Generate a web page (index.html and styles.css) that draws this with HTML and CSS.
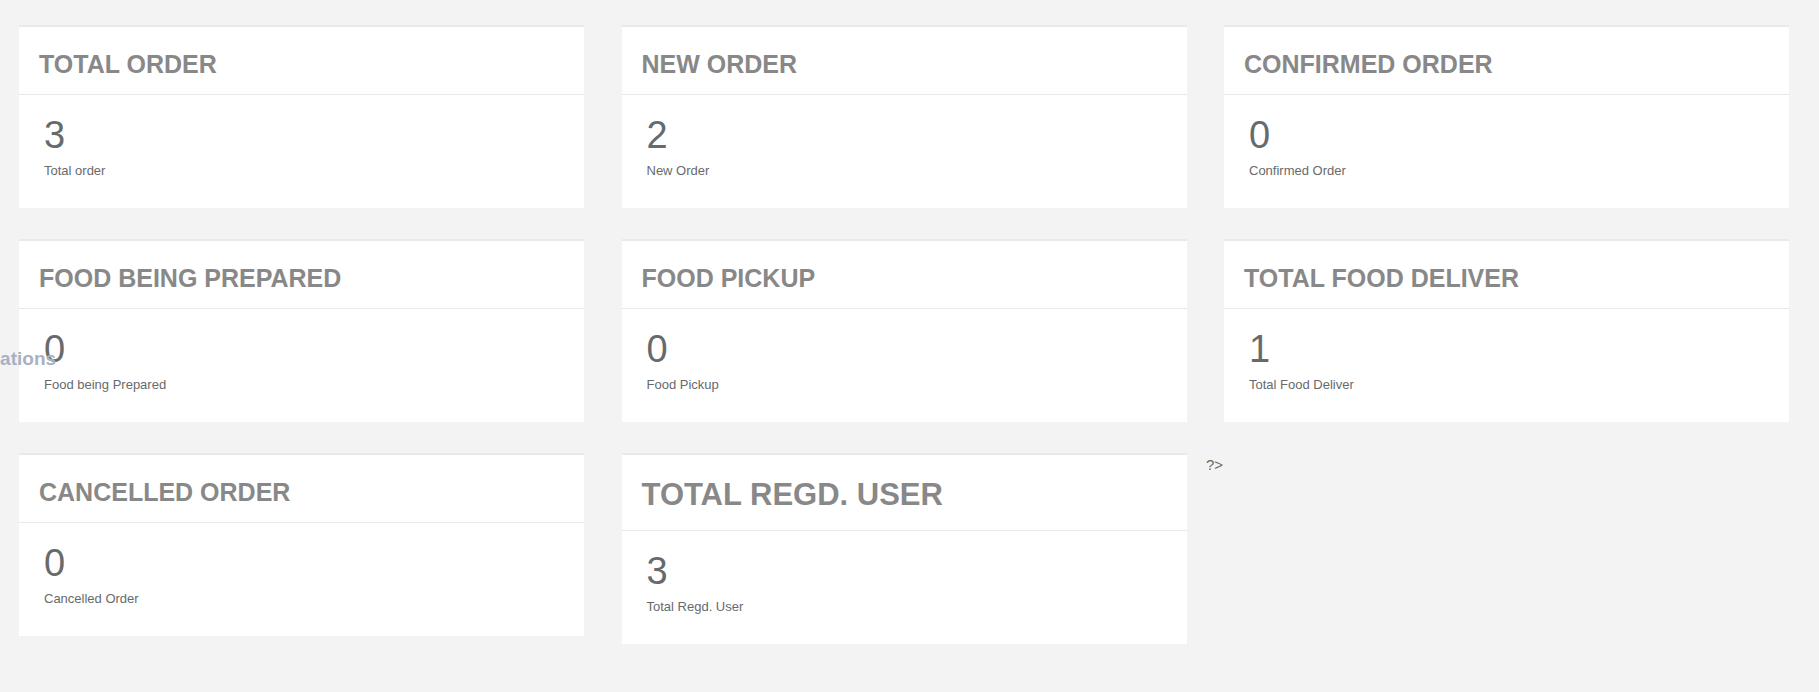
FILE: index.html
```html
<!DOCTYPE html>
<html>
<head>
<meta charset="utf-8">
<title>Dashboard</title>
<link rel="stylesheet" href="styles.css">
</head>
<body>
<span class="nav-label">Notifications</span>
<div class="dashboard">
  <div class="ibox">
    <div class="ibox-title"><h3>TOTAL ORDER</h3></div>
    <div class="ibox-content"><h1 class="count">3</h1><small class="caption">Total order</small></div>
  </div>
  <div class="ibox">
    <div class="ibox-title"><h3>NEW ORDER</h3></div>
    <div class="ibox-content"><h1 class="count">2</h1><small class="caption">New Order</small></div>
  </div>
  <div class="ibox">
    <div class="ibox-title"><h3>CONFIRMED ORDER</h3></div>
    <div class="ibox-content"><h1 class="count">0</h1><small class="caption">Confirmed Order</small></div>
  </div>
  <div class="ibox">
    <div class="ibox-title"><h3>FOOD BEING PREPARED</h3></div>
    <div class="ibox-content"><h1 class="count">0</h1><small class="caption">Food being Prepared</small></div>
  </div>
  <div class="ibox">
    <div class="ibox-title"><h3>FOOD PICKUP</h3></div>
    <div class="ibox-content"><h1 class="count">0</h1><small class="caption">Food Pickup</small></div>
  </div>
  <div class="ibox">
    <div class="ibox-title"><h3>TOTAL FOOD DELIVER</h3></div>
    <div class="ibox-content"><h1 class="count">1</h1><small class="caption">Total Food Deliver</small></div>
  </div>
  <div class="ibox">
    <div class="ibox-title"><h3>CANCELLED ORDER</h3></div>
    <div class="ibox-content"><h1 class="count">0</h1><small class="caption">Cancelled Order</small></div>
  </div>
  <div class="ibox">
    <div class="ibox-title ibox-title-lg"><h2>TOTAL REGD. USER</h2></div>
    <div class="ibox-content"><h1 class="count">3</h1><small class="caption">Total Regd. User</small></div>
  </div>
  <div class="stray">?&gt;</div>
</div>
</body>
</html>
```
FILE: styles.css
```css
html, body {
  margin: 0;
  padding: 0;
}
body {
  background: #f3f3f4;
  font-family: "Liberation Sans", Arial, sans-serif;
  color: #676a6c;
  position: relative;
  min-height: 692px;
  overflow: hidden;
}
.nav-label {
  position: absolute;
  left: -59px;
  top: 349px;
  font-weight: 700;
  font-size: 19px;
  line-height: 20px;
  color: #a7b1c2;
  white-space: nowrap;
  z-index: 1;
}
.dashboard {
  display: grid;
  grid-template-columns: repeat(3, 565px);
  column-gap: 37.5px;
  row-gap: 31px;
  align-items: start;
  padding: 25px 0 0 19px;
}
.ibox {
  background: #fff;
  border-top: 2px solid #e7eaec;
}
.ibox-title {
  padding: 24px 20px 16px 20px;
  border-bottom: 1px solid #e7eaec;
}
.ibox-title h3 {
  margin: 0;
  font-size: 25px;
  line-height: 27px;
  font-weight: 700;
  color: #888888;
}
.ibox-title-lg {
  padding: 23px 20px 19px 20px;
}
.ibox-title-lg h2 {
  margin: 0;
  font-size: 31px;
  line-height: 33px;
  font-weight: 700;
  color: #888888;
}
.ibox-content {
  padding: 18px 20px 30px 25px;
}
.count {
  margin: 0;
  font-size: 38px;
  line-height: 44px;
  font-weight: 400;
  color: #676a6c;
}
.caption {
  display: block;
  margin-top: 6px;
  font-size: 13px;
  line-height: 15px;
  color: #676a6c;
}
.stray {
  grid-column: 3;
  margin-left: -18px;
  margin-top: 3px;
  font-size: 15px;
  line-height: 17px;
  color: #676a6c;
}
```
